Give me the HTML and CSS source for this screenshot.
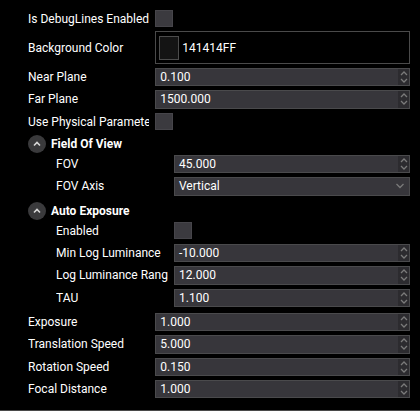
FILE: index.html
```html
<!DOCTYPE html>
<html>
<head>
<meta charset="utf-8">
<link rel="stylesheet" href="styles.css">
</head>
<body>
<div class="panel">
  <div class="row r17"><div class="label">Is DebugLines Enabled</div><div class="box"></div></div>
  <div class="row color"><div class="label">Background Color</div><div class="colorfield"><span class="swatch"></span><span class="val">141414FF</span></div></div>
  <div class="row"><div class="label">Near Plane</div><div class="field"><span class="val">0.100</span><span class="spin"><svg width="8" height="14" viewBox="0 0 8 14"><polyline points="1,5 4,2 7,5"/><polyline points="1,9 4,12 7,9"/></svg></span></div></div>
  <div class="row"><div class="label">Far Plane</div><div class="field"><span class="val">1500.000</span><span class="spin"><svg width="8" height="14" viewBox="0 0 8 14"><polyline points="1,5 4,2 7,5"/><polyline points="1,9 4,12 7,9"/></svg></span></div></div>
  <div class="row"><div class="label">Use Physical Parameters</div><div class="box"></div></div>

  <div class="section">
    <div class="header"><span class="toggle"><svg width="18" height="18" viewBox="0 0 18 18"><circle cx="9" cy="9" r="9" fill="#3a3a3c"/><polyline points="6,10.5 9,7.5 12,10.5" fill="none" stroke="#d8d8d8" stroke-width="1.6"/></svg></span><span class="title">Field Of View</span></div>
    <div class="body">
      <div class="row"><div class="label">FOV</div><div class="field"><span class="val">45.000</span><span class="spin"><svg width="8" height="14" viewBox="0 0 8 14"><polyline points="1,5 4,2 7,5"/><polyline points="1,9 4,12 7,9"/></svg></span></div></div>
      <div class="row"><div class="label">FOV Axis</div><div class="field select"><span class="val">Vertical</span><span class="drop"><svg width="10" height="8" viewBox="0 0 10 8"><polyline points="1.5,2 5,5.5 8.5,2"/></svg></span></div></div>
    </div>
  </div>

  <div class="section">
    <div class="header"><span class="toggle"><svg width="18" height="18" viewBox="0 0 18 18"><circle cx="9" cy="9" r="9" fill="#3a3a3c"/><polyline points="6,10.5 9,7.5 12,10.5" fill="none" stroke="#d8d8d8" stroke-width="1.6"/></svg></span><span class="title">Auto Exposure</span></div>
    <div class="body">
      <div class="row"><div class="label">Enabled</div><div class="box"></div></div>
      <div class="row"><div class="label">Min Log Luminance</div><div class="field"><span class="val">-10.000</span><span class="spin"><svg width="8" height="14" viewBox="0 0 8 14"><polyline points="1,5 4,2 7,5"/><polyline points="1,9 4,12 7,9"/></svg></span></div></div>
      <div class="row"><div class="label">Log Luminance Range</div><div class="field"><span class="val">12.000</span><span class="spin"><svg width="8" height="14" viewBox="0 0 8 14"><polyline points="1,5 4,2 7,5"/><polyline points="1,9 4,12 7,9"/></svg></span></div></div>
      <div class="row"><div class="label">TAU</div><div class="field"><span class="val">1.100</span><span class="spin"><svg width="8" height="14" viewBox="0 0 8 14"><polyline points="1,5 4,2 7,5"/><polyline points="1,9 4,12 7,9"/></svg></span></div></div>
    </div>
  </div>

  <div class="row"><div class="label">Exposure</div><div class="field"><span class="val">1.000</span><span class="spin"><svg width="8" height="14" viewBox="0 0 8 14"><polyline points="1,5 4,2 7,5"/><polyline points="1,9 4,12 7,9"/></svg></span></div></div>
  <div class="row"><div class="label">Translation Speed</div><div class="field"><span class="val">5.000</span><span class="spin"><svg width="8" height="14" viewBox="0 0 8 14"><polyline points="1,5 4,2 7,5"/><polyline points="1,9 4,12 7,9"/></svg></span></div></div>
  <div class="row"><div class="label">Rotation Speed</div><div class="field"><span class="val">0.150</span><span class="spin"><svg width="8" height="14" viewBox="0 0 8 14"><polyline points="1,5 4,2 7,5"/><polyline points="1,9 4,12 7,9"/></svg></span></div></div>
  <div class="row"><div class="label">Focal Distance</div><div class="field"><span class="val">1.000</span><span class="spin"><svg width="8" height="14" viewBox="0 0 8 14"><polyline points="1,5 4,2 7,5"/><polyline points="1,9 4,12 7,9"/></svg></span></div></div>
</div>
</body>
</html>
```

FILE: styles.css
```css
html, body {
  margin: 0;
  padding: 0;
  background: #000;
}
body {
  font-family: Roboto, "Liberation Sans", sans-serif;
  font-size: 12px;
  color: #fff;
}
.panel {
  height: 411px;
  box-sizing: border-box;
  border-bottom: 1px solid #4a4a4a;
  padding: 10px 10px 0 28px;
  display: flex;
  flex-direction: column;
  gap: 4px;
  overflow: hidden;
}
.row {
  display: flex;
  align-items: center;
  height: 18.33px;
  flex: none;
}
.row.r17 {
  height: 17.33px;
}
.row.color {
  height: 32.67px;
}
.label {
  width: calc(33.333% - 6px);
  margin-right: 6px;
  flex: none;
  overflow: hidden;
  white-space: nowrap;
  line-height: 18px;
}
.box {
  width: 18px;
  height: 17px;
  box-sizing: border-box;
  background: #3b3a3f;
  border: 1px solid #46454a;
}
.field {
  flex: 1;
  height: 100%;
  box-sizing: border-box;
  background: #37363b;
  border: 1px solid #4a4a4c;
  display: flex;
  align-items: center;
}
.field .val {
  flex: 1;
  padding-left: 4px;
  white-space: nowrap;
}
.spin {
  width: 11px;
  align-self: stretch;
  background: #2c2b2f;
  display: flex;
  align-items: center;
  justify-content: center;
}
.spin svg polyline,
.drop svg polyline {
  fill: none;
  stroke: #7a7a7a;
  stroke-width: 1.3;
}
.drop {
  width: 18px;
  display: flex;
  align-items: center;
  justify-content: center;
}
.colorfield {
  flex: 1;
  height: 100%;
  box-sizing: border-box;
  border: 1px solid #4a4a4a;
  display: flex;
  align-items: center;
  padding-left: 3px;
  gap: 3px;
}
.swatch {
  width: 20px;
  height: 24px;
  box-sizing: border-box;
  background: #141414;
  border: 1px solid #4c4c4c;
}
.section {
  display: flex;
  flex-direction: column;
  gap: 2px;
  padding-bottom: 2px;
}
.header {
  display: flex;
  align-items: center;
  gap: 5px;
  height: 18px;
}
.toggle {
  display: flex;
}
.title {
  font-weight: bold;
}
.body {
  padding-left: 28px;
  display: flex;
  flex-direction: column;
  gap: 4px;
}
```
